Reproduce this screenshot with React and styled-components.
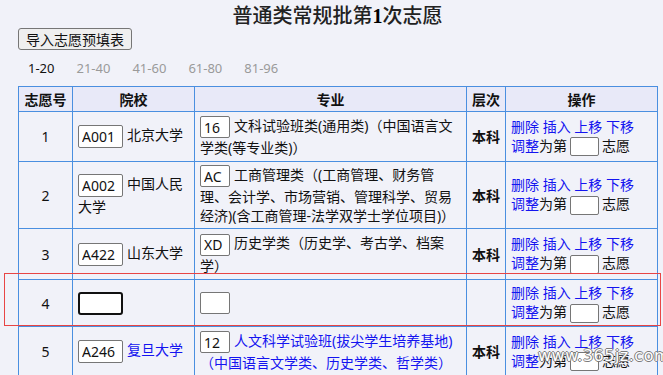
import React from 'react'
import styled, {createGlobalStyle} from 'styled-components'

const GlobalStyle = createGlobalStyle`
html,body{margin:0;padding:0;background:#f1f2f9;overflow:hidden;}
body{font-family:"Noto Sans","Noto Sans CJK SC",sans-serif;color:#111;}
`

const Page = styled.div`
  position:relative;
  width:639px;
  padding-left:18px;
`

const Title = styled.h1`
  margin:0;
  padding-top:5px;
  height:23px;
  text-align:center;
  font-family:"Liberation Serif","Noto Sans CJK SC",serif;
  font-size:20px;
  line-height:23px;
  font-weight:500;
  color:#222;
  b{font-weight:bold;color:#000;}
`

const ImportButton = styled.button`
  display:block;
  height:22px;
  padding:0 7px;
  border:1px solid #767676;
  border-radius:3px;
  background:#efefef;
  font-family:"Noto Sans CJK SC",sans-serif;
  font-size:14px;
  line-height:20px;
  color:#111;
`

const Pager = styled.div`
  display:flex;
  gap:22px;
  height:16px;
  margin:10px 0;
  padding-left:10px;
  font-size:13px;
  line-height:16px;
`

const PageItem = styled.span`
  color:${p => (p.$current ? '#111' : '#9a9a9a')};
  cursor:pointer;
`

const TableWrap = styled.div`
  position:relative;
`

const Table = styled.table`
  width:639px;
  table-layout:fixed;
  border-collapse:collapse;
  font-size:14px;
  line-height:19px;
  th,td{border:1px solid #4a8fe0;}
`

const Head = styled.th`
  height:24px;
  padding:0;
  background:#e8e9f8;
  font-family:"Noto Sans CJK SC",sans-serif;
  font-weight:bold;
  font-size:14px;
  text-align:center;
`

const Cell = styled.td`
  height:${p => p.$h}px;
  padding:2px 5px;
  vertical-align:middle;
  text-align:${p => (p.$center ? 'center' : 'left')};
  font-weight:${p => (p.$bold ? 'bold' : 'normal')};
  color:#111;
`

const CodeInput = styled.input`
  box-sizing:border-box;
  width:${p => p.$w}px;
  height:${p => p.$h}px;
  margin:0 4px 0 0;
  padding:0 3px;
  vertical-align:middle;
  border:${p => (p.$focused ? '2px solid #111' : '1px solid #767676')};
  border-radius:${p => (p.$focused ? 3 : 2)}px;
  background:#fff;
  font-family:"Noto Sans",sans-serif;
  font-size:14px;
  color:#111;
  outline:none;
`

const Text = styled.span`
  color:${p => (p.$link ? '#1414f0' : '#111')};
`

const Line = styled.div``

const Link = styled.a`
  color:#1414f0;
  text-decoration:none;
  cursor:pointer;
`

const OpInput = styled.input`
  box-sizing:border-box;
  width:29px;
  height:19px;
  margin:0 3px;
  padding:0;
  vertical-align:middle;
  border:1px solid #767676;
  border-radius:2px;
  background:#fff;
`

const Highlight = styled.div`
  position:absolute;
  left:-14px;
  top:187px;
  width:655px;
  height:51px;
  border:1px solid #e84545;
  pointer-events:none;
`

const Watermark = styled.div`
  position:absolute;
  left:538px;
  top:346px;
  font-family:"DejaVu Sans",sans-serif;
  font-size:16px;
  letter-spacing:0.5px;
  color:#fff;
  text-shadow:-1px 0 #7a7a7a,1px 0 #7a7a7a,0 -1px #7a7a7a,0 1px #7a7a7a;
`

const pages = ['1-20', '21-40', '41-60', '61-80', '81-96']

const rows = [
  {no: 1, h: 45, code: 'A001', school: '北京大学', major: '16', name: ['文科试验班类(通用类)（中国语言文', '学类(等专业类)）'], level: '本科'},
  {no: 2, h: 62, code: 'A002', school: '中国人民大学', major: 'AC', name: ['工商管理类（(工商管理、财务管', '理、会计学、市场营销、管理科学、贸易', '经济)(含工商管理-法学双学士学位项目)）'], level: '本科'},
  {no: 3, h: 46, code: 'A422', school: '山东大学', major: 'XD', name: ['历史学类（历史学、考古学、档案', '学）'], level: '本科'},
  {no: 4, h: 42, code: '', school: '', major: '', name: [], level: '', focused: true},
  {no: 5, h: 45, code: 'A246', school: '复旦大学', major: '12', name: ['人文科学试验班(拔尖学生培养基地)', '（中国语言文学类、历史学类、哲学类）'], level: '本科', link: true},
]

export default function App() {
  return (
    <>
      <GlobalStyle />
      <Page>
        <Title>普通类常规批第<b>1</b>次志愿</Title>
        <ImportButton>导入志愿预填表</ImportButton>
        <Pager>
          {pages.map((p, i) => (
            <PageItem key={p} $current={i === 0}>{p}</PageItem>
          ))}
        </Pager>
        <TableWrap>
          <Table>
            <colgroup>
              <col style={{width: 54}} />
              <col style={{width: 122}} />
              <col style={{width: 272}} />
              <col style={{width: 39}} />
              <col style={{width: 152}} />
            </colgroup>
            <thead>
              <tr>
                <Head>志愿号</Head>
                <Head>院校</Head>
                <Head>专业</Head>
                <Head>层次</Head>
                <Head>操作</Head>
              </tr>
            </thead>
            <tbody>
              {rows.map(r => (
                <tr key={r.no}>
                  <Cell $h={r.h} $center>{r.no}</Cell>
                  <Cell $h={r.h}>
                    <CodeInput $w={45} $h={23} $focused={r.focused} defaultValue={r.code} />
                    {r.link ? <Link>{r.school}</Link> : <Text>{r.school}</Text>}
                  </Cell>
                  <Cell $h={r.h}>
                    <CodeInput $w={30} $h={22} defaultValue={r.major} />
                    {r.name.map((t, i) => (
                      <React.Fragment key={i}>
                        {i > 0 && <br />}
                        <Text $link={r.link}>{t}</Text>
                      </React.Fragment>
                    ))}
                  </Cell>
                  <Cell $h={r.h} $center $bold>{r.level}</Cell>
                  <Cell $h={r.h}>
                    <Line>
                      <Link>删除</Link> <Link>插入</Link> <Link>上移</Link> <Link>下移</Link>
                    </Line>
                    <Line>
                      <Link>调整</Link>为第<OpInput />志愿
                    </Line>
                  </Cell>
                </tr>
              ))}
            </tbody>
          </Table>
          <Highlight />
        </TableWrap>
        <Watermark>www.365jz.com</Watermark>
      </Page>
    </>
  )
}
